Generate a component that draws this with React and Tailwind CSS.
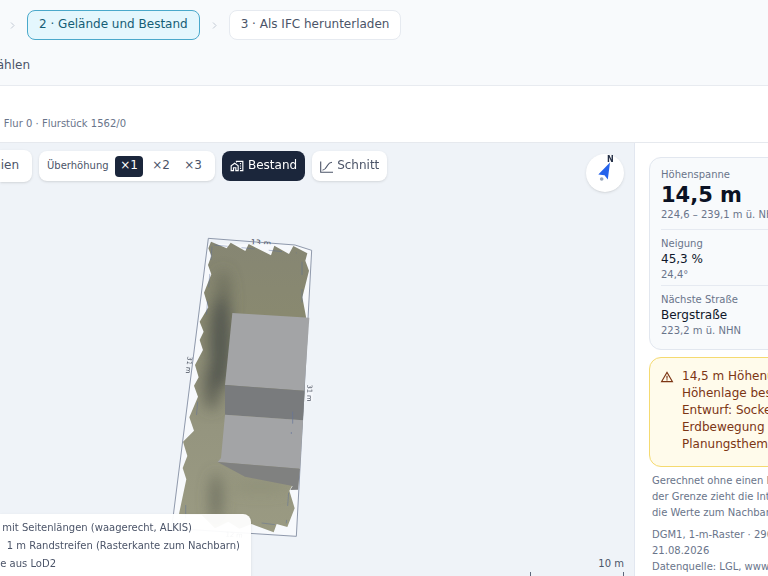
import React from 'react';
import { MdOutlineHomeWork, MdWarningAmber } from 'react-icons/md';

const terrain =
  '153,65 200,85 212,68 256,93 266,72 333,106 343,77 387,102 400,78 442,100 436,122 447,152 427,232 438,290 434,520 414,800 396,798 388,812 404,865 382,921 350,912 341,937 275,912 238,926 205,905 165,925 125,885 75,885 57,882 79,778 68,744 82,708 69,665 102,632 88,592 114,530 102,497 116,472 105,435 129,390 119,360 131,335 119,305 145,262 132,218 154,163 144,135 154,108 145,85';

function Step({ active, children }) {
  return (
    <button
      type="button"
      className={`h-[30px] rounded-lg border px-[11px] pb-0.5 text-xs whitespace-nowrap ${
        active
          ? 'border-[#4aa9cb] bg-[#e4f7fd] text-[#155e75]'
          : 'border-[#e6eaf0] bg-white text-[#4b5468]'
      }`}
    >
      {children}
    </button>
  );
}

function Chevron() {
  return (
    <svg className="h-[9px] w-[5px] shrink-0" viewBox="0 0 5 9" fill="none" stroke="#c3cad5" aria-hidden="true">
      <path d="M1 1.5 4 4.5 1 7.5" />
    </svg>
  );
}

function SectionIcon() {
  return (
    <svg className="mt-1 h-3 w-[13px]" viewBox="0 0 13 12" fill="none" stroke="currentColor" aria-hidden="true">
      <path d="M.7.5v10.8H13" strokeWidth="1.1" />
      <path d="M2.5 9.3C6 8.5 6.2 6.5 7.6 4.2 8.8 2.2 10 1.6 12 1.3" strokeWidth="1.1" />
    </svg>
  );
}

function Terrain() {
  return (
    <svg className="absolute top-0 left-0 h-[433px] w-[635px]" viewBox="-480 -231 1905 1299" role="img" aria-label="Geländemodell">
      <defs>
        <clipPath id="ground">
          <polygon points={terrain} />
        </clipPath>
        <linearGradient id="soil" x1="0" y1="0" x2="0" y2="1">
          <stop offset="0" stopColor="#868673" />
          <stop offset="0.25" stopColor="#898970" />
          <stop offset="0.65" stopColor="#95957f" />
          <stop offset="1" stopColor="#9a9a82" />
        </linearGradient>
        <filter id="soft" x="-150%" y="-50%" width="400%" height="200%">
          <feGaussianBlur stdDeviation="20" />
        </filter>
      </defs>
      <text transform="translate(302 77) rotate(4)" fill="#3d4452" fontFamily="DejaVu Sans" fontSize="24" textAnchor="middle">
        13 m
      </text>
      <polygon points="145,71 345,73 405,75 455,91 409,949 35,925" fill="#f7f9fc" />
      <polygon points={terrain} fill="url(#soil)" />
      <g clipPath="url(#ground)">
        <g filter="url(#soft)">
          <ellipse cx="190" cy="240" rx="22" ry="90" fill="#5d5f51" opacity=".6" />
          <ellipse cx="182" cy="370" rx="34" ry="140" fill="#535650" opacity=".95" />
          <ellipse cx="155" cy="500" rx="24" ry="70" fill="#565950" opacity=".8" />
          <ellipse cx="168" cy="835" rx="18" ry="75" fill="#646557" opacity=".75" />
          <ellipse cx="300" cy="800" rx="90" ry="18" fill="#85866f" opacity=".4" />
        </g>
      </g>
      <g stroke="#596d9c" strokeWidth="2" strokeDasharray="40 42" opacity=".65" fill="none">
        <path d="M163 75 410 99" />
        <path d="M426 125V290" />
        <path d="M156 80 138 300" />
        <path d="M113 545 106 625" />
        <path d="M77 855v40" />
        <path d="M386 818 379 910" />
        <path d="M305 909 345 914" />
      </g>
      <g fill="#49505e" fontFamily="DejaVu Sans" fontSize="20" textAnchor="middle">
        <text transform="translate(80 434) rotate(97)">31 m</text>
        <text transform="translate(222 951) rotate(4)">12 m</text>
      </g>
      <path d="M409 949 35 925 145 55 405 75 455 91Z" fill="none" stroke="#7b859b" strokeWidth="2.5" />
      <polygon points="217,279 448,293 433,512 195,495" fill="#a3a4a6" />
      <polygon points="195,495 433,512 429,601 195,584" fill="#797b7d" />
      <polygon points="195,584 429,601 420,746 173,726 183,714" fill="#a3a4a6" />
      <polygon points="173,726 420,746 414,809 391,810 398,798 255,770" fill="#808180" />
      <path d="M398 575v36M394 636v6" stroke="#66769c" strokeWidth="2" />
      <rect x="437" y="495" width="22" height="48" fill="#f5f7fb" />
      <text transform="translate(442 519) rotate(91)" fill="#49505e" fontFamily="DejaVu Sans" fontSize="20" textAnchor="middle">
        31 m
      </text>
    </svg>
  );
}

function Compass() {
  return (
    <button type="button" aria-label="Nach Norden ausrichten" className="mt-1 h-[38px] w-[38px] rounded-full bg-white shadow">
      <svg viewBox="0 0 38 38" className="h-[38px] w-[38px] overflow-visible">
        <path d="M24 8.5 12.3 20.5 18.5 21.3 21.8 25.5Z" fill="#2563eb" />
        <circle cx="15.7" cy="25" r="1.8" fill="#94a3b8" />
        <text x="21" y="7.5" fontSize="8" fontWeight="700" fontFamily="DejaVu Sans" fill="#253047">N</text>
      </svg>
    </button>
  );
}

function Stat({ label, value, note }) {
  return (
    <div className="border-t border-[#e6eaf1] pt-[6px] pb-0.5">
      <dt className="text-[10px] leading-4 text-[#69748a]">{label}</dt>
      <dd className="text-xs leading-[15px] text-[#0f172a]">{value}</dd>
      <dd className="text-[10px] leading-4 text-[#69748a]">{note}</dd>
    </div>
  );
}

export default function App() {
  return (
    <div className="flex h-screen flex-col overflow-hidden bg-white font-['DejaVu_Sans',sans-serif] text-[#4b5468]">
      <header className="border-b border-[#e8ebf0] bg-[#f8fafc] pt-[10px] pb-[11px]">
        <nav className="flex items-center gap-3 pl-[10px]">
          <Chevron />
          <Step active>2 · Gelände und Bestand</Step>
          <Chevron />
          <Step>3 · Als IFC herunterladen</Step>
        </nav>
        <div className="mt-4 flex w-[30px] justify-end overflow-hidden text-xs leading-[18px] whitespace-nowrap">
          <a href="#auswahl">wählen</a>
        </div>
      </header>

      <div className="border-b border-[#e6e9ee] pt-[30px] pb-[10px]">
        <p className="flex w-[126px] justify-end overflow-hidden text-[10px] leading-4 whitespace-nowrap text-[#69748a]">
          Flur 0 · Flurstück 1562/0
        </p>
      </div>

      <div className="flex min-h-0 flex-1">
        <main className="relative min-w-0 flex-1 overflow-hidden bg-[#eff3f8]">
          <Terrain />
          <div className="relative flex items-start justify-between pt-[7px] pr-[10px]">
            <div className="flex items-center gap-[7px] text-xs whitespace-nowrap">
              <button
                type="button"
                className="flex h-8 w-8 items-center justify-end overflow-hidden rounded-r-lg bg-white pr-[13px] pb-0.5 shadow"
              >
                Linien
              </button>
              <div className="flex h-[30px] items-center rounded-lg bg-white px-2 shadow">
                <span className="w-[68px] text-[10px]">Überhöhung</span>
                <button type="button" className="h-[21px] w-7 rounded bg-[#1b263b] pb-0.5 text-white">×1</button>
                <button type="button" className="ml-1 h-[21px] w-7 pb-0.5">×2</button>
                <button type="button" className="ml-1 h-[21px] w-7 pb-0.5">×3</button>
              </div>
              <button type="button" className="flex h-[30px] items-center gap-1 rounded-lg bg-[#1b263b] px-2 pb-0.5 text-white">
                <MdOutlineHomeWork className="mt-0.5 h-[14px] w-[14px]" />
                Bestand
              </button>
              <button type="button" className="flex h-[30px] items-center gap-1 rounded-lg bg-white px-2 pb-0.5 shadow">
                <SectionIcon />
                Schnitt
              </button>
            </div>
            <Compass />
          </div>

          <ul className="absolute -bottom-1 left-0 w-[251px] overflow-hidden rounded-tr-lg bg-white/95 pt-[5px] pb-[7px] text-[10px] leading-[18px] whitespace-nowrap shadow">
            <li className="flex w-[192px] justify-end">mit Seitenlängen (waagerecht, ALKIS)</li>
            <li className="flex w-[240px] justify-end">1 m Randstreifen (Rasterkante zum Nachbarn)</li>
            <li className="flex w-14 justify-end">e aus LoD2</li>
          </ul>

          <div className="absolute right-[10px] bottom-0 w-[94px] text-right text-[10px]">
            <span className="block leading-4">10 m</span>
            <span className="block h-1 border-x border-[#5d687c]" />
          </div>
        </main>

        <aside className="w-[134px] shrink-0 overflow-hidden border-l border-[#e2e7f0] pt-[14px] pl-[14px] whitespace-nowrap">
          <div className="w-72">
            <dl className="rounded-xl border border-[#e2e7ef] bg-[#f8fafc] px-[11px] pt-[9px] pb-2">
              <div className="pb-[6px]">
                <dt className="text-[10px] leading-4 text-[#69748a]">Höhenspanne</dt>
                <dd className="text-[21px] leading-6 font-bold text-[#0b1224]">14,5 m</dd>
                <dd className="text-[10px] leading-4 text-[#69748a]">224,6 – 239,1 m ü. NHN</dd>
              </div>
              <Stat label="Neigung" value="45,3 %" note="24,4°" />
              <Stat label="Nächste Straße" value="Bergstraße" note="223,2 m ü. NHN" />
            </dl>

            <div className="mt-[7px] flex gap-2 rounded-xl border border-[#f5da70] bg-[#fffbeb] px-[10px] pt-[10px] pb-[13px] text-xs text-[#7c3514]">
              <MdWarningAmber className="mt-0.5 h-[14px] w-[14px] shrink-0" />
              <p className="leading-[17px]">
                14,5 m Höhenunterschied.
                <br />
                Höhenlage bestimmt den
                <br />
                Entwurf: Sockel, Keller und
                <br />
                Erdbewegung sind frühe
                <br />
                Planungsthemen.
              </p>
            </div>

            <div className="mt-[6px] pl-[3px] text-[10px] leading-4 text-[#69748a]">
              <p>
                Gerechnet ohne einen Randstreifen: An
                <br />
                der Grenze zieht die Interpolation
                <br />
                die Werte zum Nachbargelände.
              </p>
              <p className="mt-[6px]">
                DGM1, 1-m-Raster · 290 Punkte
                <br />
                21.08.2026
                <br />
                Datenquelle: LGL, www.lgl-bw.de
              </p>
            </div>
          </div>
        </aside>
      </div>
    </div>
  );
}
